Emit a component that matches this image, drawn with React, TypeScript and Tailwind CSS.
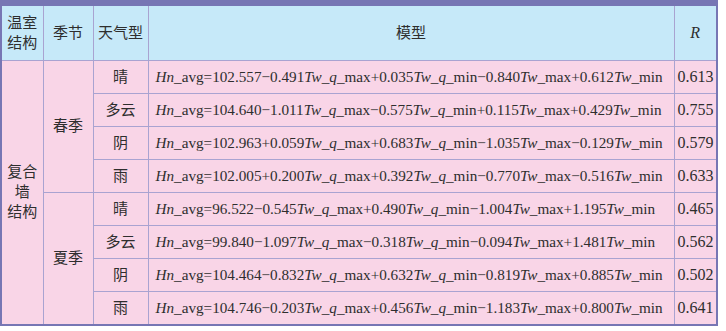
const ROWS = [
  {
    season: "春季",
    items: [
      ["晴", "Hn_avg=102.557−0.491Tw_q_max+0.035Tw_q_min−0.840Tw_max+0.612Tw_min", "0.613"],
      ["多云", "Hn_avg=104.640−1.011Tw_q_max−0.575Tw_q_min+0.115Tw_max+0.429Tw_min", "0.755"],
      ["阴", "Hn_avg=102.963+0.059Tw_q_max+0.683Tw_q_min−1.035Tw_max−0.129Tw_min", "0.579"],
      ["雨", "Hn_avg=102.005+0.200Tw_q_max+0.392Tw_q_min−0.770Tw_max−0.516Tw_min", "0.633"],
    ],
  },
  {
    season: "夏季",
    items: [
      ["晴", "Hn_avg=96.522−0.545Tw_q_max+0.490Tw_q_min−1.004Tw_max+1.195Tw_min", "0.465"],
      ["多云", "Hn_avg=99.840−1.097Tw_q_max−0.318Tw_q_min−0.094Tw_max+1.481Tw_min", "0.562"],
      ["阴", "Hn_avg=104.464−0.832Tw_q_max+0.632Tw_q_min−0.819Tw_max+0.885Tw_min", "0.502"],
      ["雨", "Hn_avg=104.746−0.203Tw_q_max+0.456Tw_q_min−1.183Tw_max+0.800Tw_min", "0.641"],
    ],
  },
];

// italic for variable names: Hn, Tw, and the q subscript
function Formula({ text }: { text: string }) {
  const parts = text.split(/(Hn|Tw|(?<=_)q(?=_))/g);
  return (
    <>
      {parts.map((p, i) =>
        p === "Hn" || p === "Tw" || p === "q" ? (
          <i key={i}>{p}</i>
        ) : (
          <span key={i}>{p}</span>
        )
      )}
    </>
  );
}

const cell = "border border-[#a9a3d1] text-center align-middle";

export default function App() {
  return (
    <div className="w-[726px] h-[331px] bg-white">
      <div
        className="w-[718px] border-t-[6px] border-x-2 border-b-2 border-[#7776b4] text-[#2e2e2e]"
        style={{ fontFamily: '"Liberation Serif", "Noto Sans CJK SC", serif' }}
      >
        <table className="w-full table-fixed border-collapse border-hidden text-[15px] leading-[20px]">
          <colgroup>
            <col className="w-[41px]" />
            <col className="w-[50px]" />
            <col className="w-[55px]" />
            <col className="w-[526px]" />
            <col />
          </colgroup>
          <thead>
            <tr className="h-[54px] bg-[#c6e9f9]">
              <th className={`${cell} font-normal`}>
                温室
                <br />
                结构
              </th>
              <th className={`${cell} font-normal`}>季节</th>
              <th className={`${cell} font-normal`}>天气型</th>
              <th className={`${cell} font-normal`}>模型</th>
              <th className={`${cell} font-normal italic text-[16px]`}>R</th>
            </tr>
          </thead>
          <tbody className="bg-[#f9d5e7]">
            {ROWS.map((group, gi) =>
              group.items.map(([weather, formula, r], i) => (
                <tr key={`${gi}-${i}`} className="h-[33px]">
                  {gi === 0 && i === 0 && (
                    <td rowSpan={8} className={cell}>
                      复合
                      <br />墙<br />
                      结构
                    </td>
                  )}
                  {i === 0 && (
                    <td rowSpan={group.items.length} className={cell}>
                      {group.season}
                    </td>
                  )}
                  <td className={cell}>{weather}</td>
                  <td className={`${cell} text-left pl-[7px] whitespace-nowrap text-[15.2px]`}>
                    <Formula text={formula} />
                  </td>
                  <td className={`${cell} text-left pl-[3px] text-[16px]`}>{r}</td>
                </tr>
              ))
            )}
          </tbody>
        </table>
      </div>
    </div>
  );
}
